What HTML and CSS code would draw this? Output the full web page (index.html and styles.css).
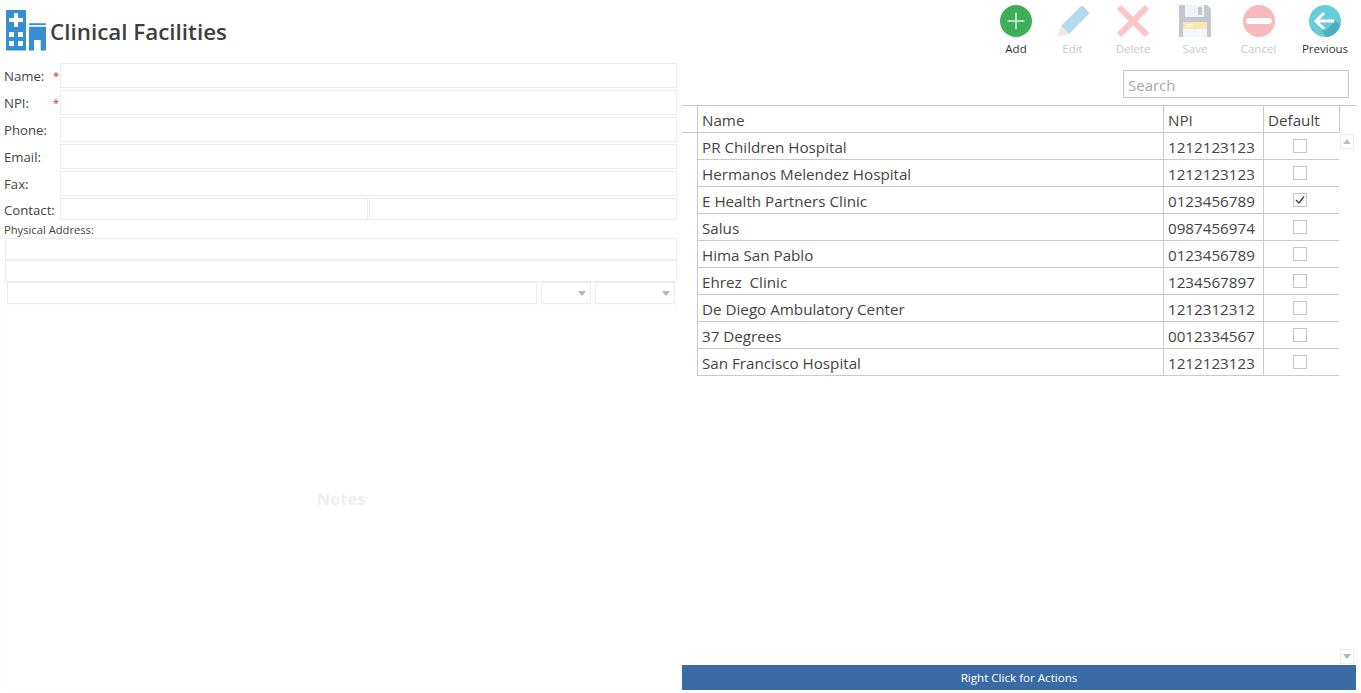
FILE: index.html
```html
<!DOCTYPE html>
<html lang="en">
<head>
<meta charset="utf-8">
<title>Clinical Facilities</title>
<link rel="stylesheet" href="styles.css">
</head>
<body>
<div class="app">
  <section class="left">
    <header class="title-bar">
      <svg class="logo" width="40" height="41" viewBox="0 0 40 41">
        <path fill="#368fce" d="M0 0h20v40.500H0z"/>
        <path fill="#fff" d="M8 3h4v5h5v4h-5v5H8v-5H3V8h5zM3 22h5v5H3zM12 22h5v5h-5zM3 31h5v5H3zM12 31h5v5h-5z"/>
        <path fill="#368fce" d="M23 13.300h17V15H23zM23 16.700h17v23.800h-5.300V30h-6.700v10.500H23z"/>
      </svg>
      <h1 class="title">Clinical Facilities</h1>
    </header>
    <form class="form">
      <div class="row"><label class="lbl">Name:<span class="req">*</span></label><input class="field"></div>
      <div class="row"><label class="lbl">NPI:<span class="req">*</span></label><input class="field"></div>
      <div class="row"><label class="lbl">Phone:</label><input class="field"></div>
      <div class="row"><label class="lbl">Email:</label><input class="field"></div>
      <div class="row"><label class="lbl">Fax:</label><input class="field"></div>
      <div class="row row-contact"><label class="lbl">Contact:</label><input class="field"><input class="field field-second"></div>
      <div class="addr-label">Physical Address:</div>
      <input class="field addr-line">
      <input class="field addr-line">
      <div class="addr-city">
        <input class="field city">
        <div class="drop state"><i class="tri"></i></div>
        <div class="drop zip"><i class="tri"></i></div>
      </div>
    </form>
    <div class="notes">Notes</div>
  </section>
  <section class="right">
    <nav class="toolbar">
      <div class="tool t-add">
        <svg width="32" height="32" viewBox="0 0 32 32"><circle cx="16" cy="16" r="16" fill="#3fae5a"/><path d="M16 7.500v17M7.500 16h17" stroke="#d9f0df" stroke-width="1.500"/></svg>
        <span class="tool-name">Add</span>
      </div>
      <div class="tool t-edit off">
        <svg width="34" height="32" viewBox="0 0 34 32"><path fill="#b3dbeb" d="M5 21L24 2q2-2 4 0l4 4q2 2 0 4L13 29z"/><path fill="#f9e4de" d="M5 21l8 8-12 3z"/></svg>
        <span class="tool-name">Edit</span>
      </div>
      <div class="tool t-delete off">
        <svg width="32" height="32" viewBox="0 0 32 32"><path d="M2 2l28 28M30 2L2 30" stroke="#ffc4c6" stroke-width="6"/></svg>
        <span class="tool-name">Delete</span>
      </div>
      <div class="tool t-save off">
        <svg width="32" height="32" viewBox="0 0 32 32"><path fill="#c4c6d2" d="M0 0h28l4 4v28H0z"/><path fill="#f2f3f6" d="M6 0h19v12H6z"/><path fill="#c4c6d2" d="M19 2h4v8h-4z"/><path fill="#f9e7ae" d="M4 17h24v7H4z"/><path fill="#f3f6fa" d="M4 24h24v8H4z"/><path fill="#fff" d="M7 19h7v1H7zM7 21h4v1H7z"/></svg>
        <span class="tool-name">Save</span>
      </div>
      <div class="tool t-cancel off">
        <svg width="32" height="32" viewBox="0 0 32 32"><circle cx="16" cy="16" r="16" fill="#f7b9bd"/><rect x="3" y="13" width="26" height="6" rx="3" fill="#fff"/></svg>
        <span class="tool-name">Cancel</span>
      </div>
      <div class="tool t-prev">
        <svg width="32" height="32" viewBox="0 0 32 32"><circle cx="16" cy="16" r="16" fill="#67ced9"/><path fill="#4bb0bd" d="M8 18l8 8 10-10 5.500 3A16 16 0 0 1 17 32z"/><path d="M7 16h18M15 8l-8 8 8 8" fill="none" stroke="#fff" stroke-width="3"/></svg>
        <span class="tool-name">Previous</span>
      </div>
    </nav>
    <div class="search-row"><input class="search" placeholder="Search"></div>
    <div class="grid-head">
      <div class="hc hc-ind"></div>
      <div class="hc">Name</div>
      <div class="hc">NPI</div>
      <div class="hc">Default</div>
      <div class="hc-end"></div>
    </div>
    <div class="grid-body">
      <div class="rows">
        <div class="gr"><div class="c">PR Children Hospital</div><div class="c">1212123123</div><div class="c cc"><i class="cb"></i></div></div>
        <div class="gr"><div class="c">Hermanos Melendez Hospital</div><div class="c">1212123123</div><div class="c cc"><i class="cb"></i></div></div>
        <div class="gr"><div class="c">E Health Partners Clinic</div><div class="c">0123456789</div><div class="c cc"><i class="cb"><svg width="12" height="12" viewBox="0 0 12 12"><path d="M2 6l3 3 5-6.500" fill="none" stroke="#444" stroke-width="1.400"/></svg></i></div></div>
        <div class="gr"><div class="c">Salus</div><div class="c">0987456974</div><div class="c cc"><i class="cb"></i></div></div>
        <div class="gr"><div class="c">Hima San Pablo</div><div class="c">0123456789</div><div class="c cc"><i class="cb"></i></div></div>
        <div class="gr"><div class="c pre">Ehrez  Clinic</div><div class="c">1234567897</div><div class="c cc"><i class="cb"></i></div></div>
        <div class="gr"><div class="c">De Diego Ambulatory Center</div><div class="c">1212312312</div><div class="c cc"><i class="cb"></i></div></div>
        <div class="gr"><div class="c">37 Degrees</div><div class="c">0012334567</div><div class="c cc"><i class="cb"></i></div></div>
        <div class="gr"><div class="c">San Francisco Hospital</div><div class="c">1212123123</div><div class="c cc"><i class="cb"></i></div></div>
      </div>
      <div class="vscroll">
        <div class="sb"><i class="up"></i></div>
        <div class="sb"><i class="down"></i></div>
      </div>
    </div>
    <footer class="hint">Right Click for Actions</footer>
  </section>
</div>
</body>
</html>
```
FILE: styles.css
```css
* { box-sizing: border-box; }
html, body { margin: 0; padding: 0; height: 693px; overflow: hidden; background: #fff; }
body { font-family: "Open Sans", "Noto Sans", "Liberation Sans", sans-serif; color: #444; }
.app { display: flex; height: 690px; }
.left { width: 682px; display: flex; flex-direction: column; }
.right { flex: 1; display: flex; flex-direction: column; padding-right: 5px; min-width: 0; }

.title-bar { height: 63px; display: flex; padding: 10px 0 0 6px; }
.logo { flex: none; }
.title { margin: 5px 0 0 4px; font-size: 22.400px; line-height: 34px; font-weight: 600; color: #3e3e3e; white-space: nowrap; }

.form { display: flex; flex-direction: column; padding-right: 5px; }
.row { display: flex; height: 25px; margin-bottom: 2px; align-items: center; }
.row-contact { height: 22px; margin-bottom: 0; }
.row-contact .lbl { padding-top: 2px; }
.field-second { margin-left: 1px; }
.lbl { width: 60px; flex: none; padding-left: 4px; font-size: 13.200px; color: #444; position: relative; }
.req { position: absolute; left: 53px; top: 1px; color: #e8112d; font-size: 11px; }
.field { flex: 1; min-width: 0; height: 100%; border: 1px solid #ececec; background: #fff; padding: 0; margin-top: 0; margin-bottom: 0; outline: 0; display: block; }
.addr-label { height: 18px; padding-left: 4px; font-size: 11.200px; line-height: 19px; color: #444; }
.addr-line { flex: none; height: 22px; margin-left: 5px; }
.addr-city { display: flex; height: 22px; padding: 0 2px 0 7px; gap: 4px; }
.city { width: 530px; flex: none; }
.drop { border: 1px solid #ececec; height: 100%; display: flex; align-items: center; justify-content: flex-end; padding-right: 4px; }
.state { width: 50px; }
.zip { width: 80px; }
.tri { width: 0; height: 0; border: 4px solid transparent; border-top: 5px solid #b5b5b5; border-bottom: 0; }

.notes { flex: 1; display: flex; align-items: center; justify-content: center; margin: 2px 5px 1px; border: 1px solid #fbfbfb; padding: 1px 0 0 0; font-size: 16.500px; font-weight: 700; color: #efefef; }

.toolbar { display: flex; justify-content: flex-end; height: 70px; padding: 5px 0 0 0; }
.tool { display: flex; flex-direction: column; align-items: center; flex: none; }
.tool-name { font-size: 11.500px; line-height: 16px; margin-top: 4px; color: #333; white-space: nowrap; }
.off .tool-name { color: #c9c9c9; }
.t-add { width: 60px; }
.t-edit { width: 53px; }
.t-delete { width: 68px; }
.t-save { width: 56px; }
.t-cancel { width: 71px; }
.t-prev { width: 62px; }

.search-row { display: flex; justify-content: flex-end; height: 35px; padding-right: 7px; }
.search { width: 226px; height: 28px; border: 1px solid #c8c8c8; padding: 2px 4px 0; font: 15px "Open Sans", "Noto Sans", sans-serif; color: #444; outline: 0; }
.search::placeholder { color: #a9a9a9; opacity: 1; }

.grid-head { display: grid; grid-template-columns: 15px 466px 100px 76px 17px; grid-template-rows: 27px; height: 28px; border-top: 1px solid #c8cacd; }
.hc { border-left: 1px solid #c8cacd; border-bottom: 1px solid #c8cacd; padding: 0 4px; font-size: 15.200px; line-height: 28px; color: #444; }
.hc-ind { border-left: 0; }
.hc-end { border-left: 1px solid #c8cacd; }

.grid-body { flex: 1; display: flex; min-height: 0; }
.rows { width: 657px; padding-left: 15px; flex: none; }
.gr { display: grid; grid-template-columns: 466px 100px 76px; height: 27px; }
.c { border-left: 1px solid #c8cacd; border-bottom: 1px solid #c8cacd; padding: 0 4px; font-size: 15.200px; line-height: 28px; color: #444; white-space: nowrap; overflow: hidden; }
.pre { white-space: pre; }
.cc { display: flex; align-items: center; justify-content: center; padding: 0 3px 0 0; }
.cb { width: 14px; height: 14px; border: 1px solid #c4c4c4; display: block; background: #fff; }
.cb svg { display: block; margin: 0; }
.vscroll { flex: 1; display: flex; flex-direction: column; justify-content: space-between; padding: 1px 2px 1px 1px; }
.sb { width: 14px; height: 15px; border: 1px solid #ececec; display: flex; align-items: center; justify-content: center; }
.up { width: 0; height: 0; border: 4px solid transparent; border-bottom: 5px solid #c0c0c0; border-top: 0; }
.down { width: 0; height: 0; border: 4px solid transparent; border-top: 5px solid #b5b5b5; border-bottom: 0; }

.hint { height: 25px; flex: none; background: #3a6ba5; color: #fff; text-align: center; font-size: 11.600px; line-height: 25px; }
```
